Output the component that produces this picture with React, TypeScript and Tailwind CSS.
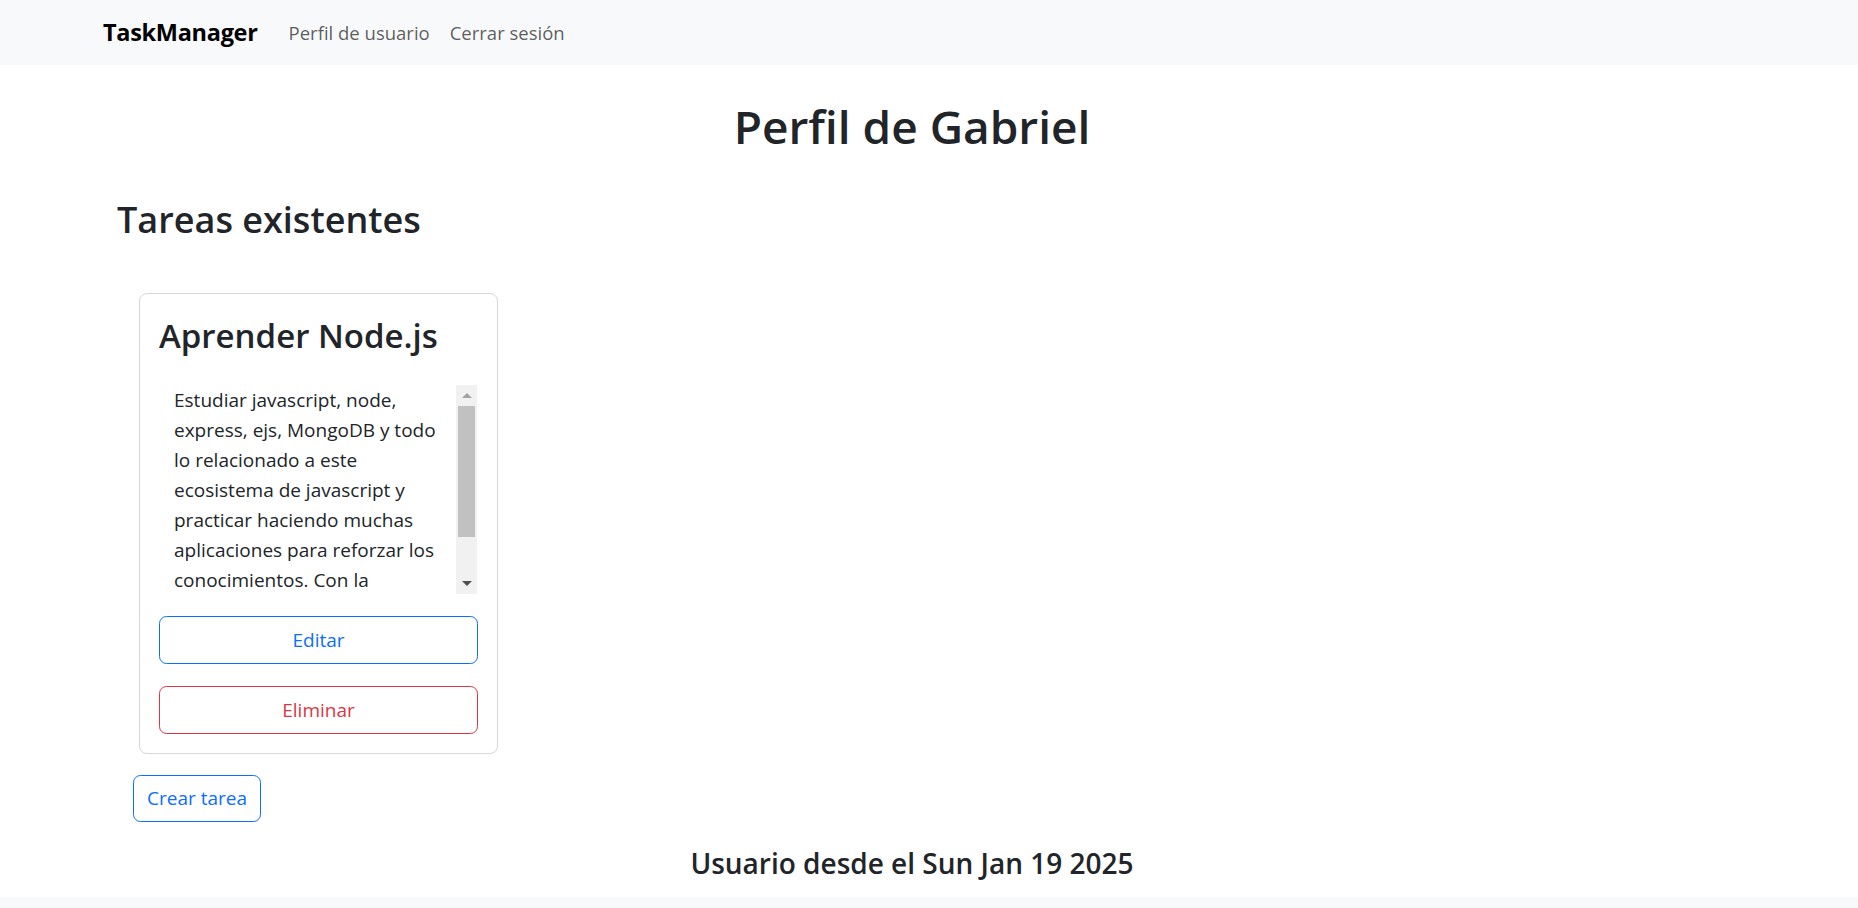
import React from "react";

const lines = [
  "Estudiar javascript, node,",
  "express, ejs, MongoDB y todo",
  "lo relacionado a este",
  "ecosistema de javascript y",
  "practicar haciendo muchas",
  "aplicaciones para reforzar los",
  "conocimientos. Con la",
];

const Scrollbar: React.FC = () => (
  <div className="w-[21px] mr-px my-px bg-[#f1f1f1] flex flex-col items-center">
    <div className="h-[21px] flex items-center justify-center">
      <div className="w-0 h-0 border-l-[5px] border-r-[5px] border-b-[5px] border-l-transparent border-r-transparent border-b-[#a3a3a3]" />
    </div>
    <div className="w-[17px] h-[131px] bg-[#c1c1c1]" />
    <div className="flex-1" />
    <div className="h-[21px] flex items-center justify-center">
      <div className="w-0 h-0 border-l-[5px] border-r-[5px] border-t-[5px] border-l-transparent border-r-transparent border-t-[#505050]" />
    </div>
  </div>
);

const TaskCard: React.FC = () => (
  <div className="w-[359px] border border-[#d6d6d6] rounded-[8px] px-[19px] pt-[19px] pb-[19px] bg-white">
    <h3 className="text-[33px] leading-[42px] font-semibold text-[#212529] mt-[2px]">
      Aprender Node.js
    </h3>
    <div className="mt-[27px] h-[211px] flex overflow-hidden">
      <div className="flex-1 pl-[15px] pt-px text-[19px] leading-[30px] text-[#212529]">
        {lines.map((l) => (
          <div key={l} className="whitespace-nowrap">
            {l}
          </div>
        ))}
      </div>
      <Scrollbar />
    </div>
    <button className="mt-[21px] w-full h-[48px] border border-[#0d6efd] rounded-[7.5px] text-[#0d6efd] text-[19px]">
      Editar
    </button>
    <button className="mt-[22px] w-full h-[48px] border border-[#dc3545] rounded-[7.5px] text-[#dc3545] text-[19px]">
      Eliminar
    </button>
  </div>
);

export default function App() {
  return (
    <div
      className="w-[1858px] min-h-[908px] bg-white flex flex-col"
      style={{ fontFamily: '"Open Sans", "Noto Sans", sans-serif' }}
    >
      <nav className="h-[65px] bg-[#f8f9fa] flex items-center pl-[103px]">
        <span className="text-[23.5px] font-bold text-black tracking-[-0.3px]">TaskManager</span>
        <div className="flex ml-[31px] gap-[20px] text-[18.5px] text-black/65">
          <span>Perfil de usuario</span>
          <span>Cerrar sesión</span>
        </div>
      </nav>
      <main className="w-[1824px] flex-1 flex flex-col">
        <h1 className="mt-[31px] text-center text-[46px] leading-[60px] font-semibold text-[#212529]">
          Perfil de Gabriel
        </h1>
        <h2 className="mt-[40px] pl-[117px] text-[36px] leading-[48px] font-semibold text-[#212529]">
          Tareas existentes
        </h2>
        <div className="mt-[49px] pl-[139px]">
          <TaskCard />
        </div>
        <div className="mt-[21px] pl-[133px]">
          <button className="h-[47px] w-[128px] border border-[#0d6efd] rounded-[7.5px] text-[#0d6efd] text-[19px]">
            Crear tarea
          </button>
        </div>
        <h4 className="mt-[23px] text-center text-[28px] leading-[36px] font-semibold text-[#212529]">
          Usuario desde el Sun Jan 19 2025
        </h4>
      </main>
      <footer className="mt-[16px] h-[12px] bg-[#f8f9fa]" />
    </div>
  );
}
